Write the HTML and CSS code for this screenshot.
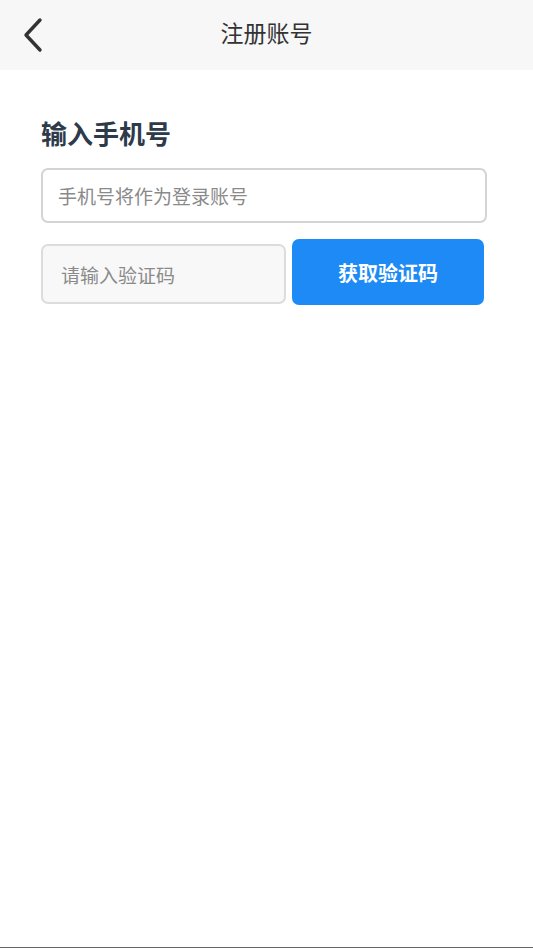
FILE: index.html
```html
<!DOCTYPE html>
<html lang="zh">
<head>
<meta charset="utf-8">
<title>注册账号</title>
<link rel="stylesheet" href="styles.css">
</head>
<body>
<div class="page">
  <header class="nav">
    <button class="back" aria-label="返回">
      <svg width="22" height="36" viewBox="0 0 22 36"><path d="M18 3 L4 18 L18 33" fill="none" stroke="#333" stroke-width="3.4" stroke-linecap="round" stroke-linejoin="round"/></svg>
    </button>
    <h1 class="title">注册账号</h1>
  </header>
  <main class="content">
    <h2 class="heading">输入手机号</h2>
    <div class="field phone"><span class="ph">手机号将作为登录账号</span></div>
    <div class="row">
      <div class="field code"><span class="ph">请输入验证码</span></div>
      <button class="send">获取验证码</button>
    </div>
  </main>
  <div class="bottom-line"></div>
</div>
</body>
</html>
```
FILE: styles.css
```css
* { box-sizing: border-box; }
html, body { margin: 0; padding: 0; }
body {
  font-family: "Noto Sans CJK SC", "Noto Sans", sans-serif;
  background: #fff;
  width: 533px;
  height: 948px;
  overflow: hidden;
}
.page {
  height: 948px;
  display: flex;
  flex-direction: column;
}
.nav {
  height: 70px;
  background: #f7f7f7;
  display: flex;
  align-items: center;
  justify-content: center;
  position: relative;
  padding-bottom: 5px;
}
.back {
  position: absolute;
  left: 22px;
  top: 17px;
  border: 0;
  background: none;
  padding: 0;
  width: 22px;
  height: 36px;
}
.back svg { display: block; }
.title {
  margin: 0;
  font-size: 23px;
  font-weight: 400;
  color: #333;
  line-height: 1;
}
.content {
  flex: 1;
  padding: 0 46px 0 41px;
}
.heading {
  margin: 45px 0 0;
  font-size: 26px;
  line-height: 36px;
  font-weight: 700;
  color: #2c3a4a;
}
.field {
  border: 2px solid #d4d4d4;
  border-radius: 7px;
  display: flex;
  align-items: center;
}
.phone {
  margin-top: 17px;
  height: 55px;
  width: 446px;
  background: #fff;
  padding-left: 15px;
}
.ph {
  font-size: 19px;
  color: #8a8a8a;
}
.row {
  display: flex;
  align-items: flex-start;
  gap: 6px;
  margin-top: 16px;
}
.code {
  width: 245px;
  height: 60px;
  margin-top: 5px;
  background: #f8f8f8;
  border-color: #dcdcdc;
  padding-left: 18px;
}
.send {
  width: 192px;
  height: 66px;
  border: 0;
  border-radius: 7px;
  background: #1d8af6;
  color: #fff;
  font-family: "Noto Sans CJK SC", "Noto Sans", sans-serif;
  font-size: 20px;
  font-weight: 700;
  padding: 0;
}
.bottom-line {
  height: 1px;
  background: #666;
}
```
